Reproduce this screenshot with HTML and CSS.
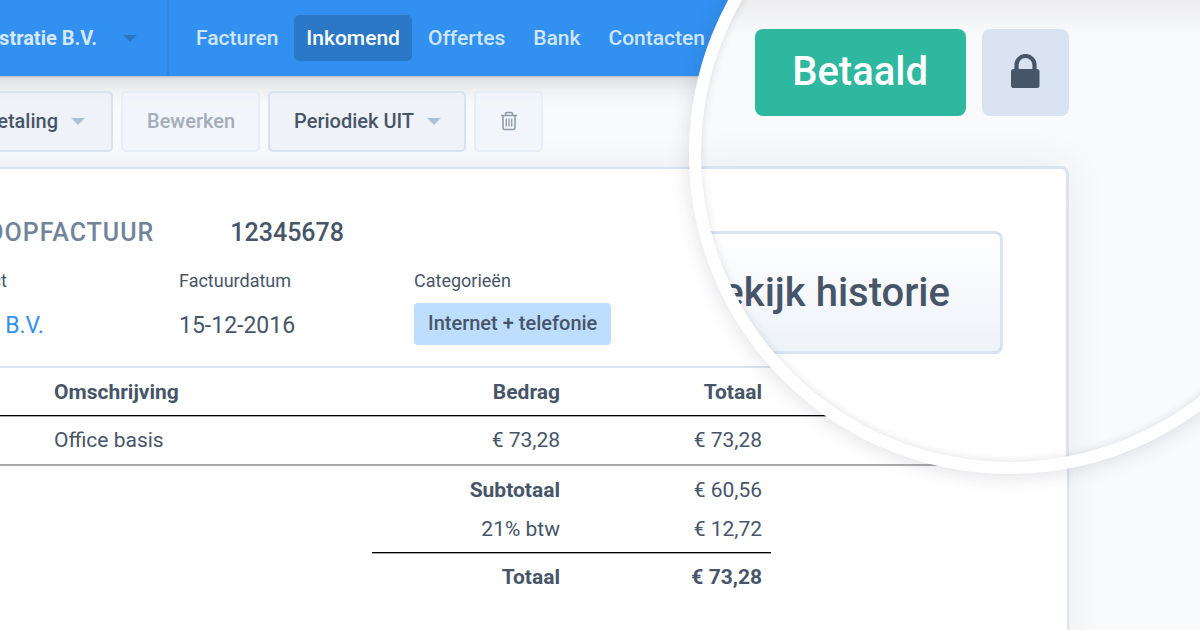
FILE: index.html
```html
<!doctype html>
<html lang="nl">

<head>
    <title>Inkoopfactuur 12345678</title>
    <meta charset="utf-8">
    <link rel="stylesheet" href="styles.css">
</head>

<body>
    <div class="app">
        <header class="topbar">
            <button class="administration" type="button">Demo Administratie B.V. <span class="caret"></span></button>
            <nav class="menu">
                <a href="#">Facturen</a>
                <a href="#" class="active">Inkomend</a>
                <a href="#">Offertes</a>
                <a href="#">Bank</a>
                <a href="#">Contacten</a>
            </nav>
        </header>
        <main>
            <div class="toolbar">
                <button class="btn btn-payment" type="button">Koppel aan betaling <span class="caret"></span></button>
                <button class="btn" type="button" disabled>Bewerken</button>
                <button class="btn" type="button">Periodiek UIT <span class="caret"></span></button>
                <button class="btn" type="button" aria-label="Verwijderen" disabled>
                    <svg width="18" height="20" viewBox="0 0 18 20" fill="none" stroke="#8d99a8" stroke-width="1.5">
                        <path d="M1 4.5h16M5.5 4V2.8Q5.5 1.5 6.8 1.5h4.4Q12.5 1.5 12.5 2.8V4M3 4.5V17Q3 18.5 4.5 18.5h9Q15 18.5 15 17V4.5"/>
                        <path d="M6.3 7.5v8M9 7.5v8M11.7 7.5v8" stroke-width="1.3"/>
                    </svg>
                </button>
            </div>
            <section class="invoice">
                <h1><span class="kind">INKOOPFACTUUR</span> <span>12345678</span></h1>
                <dl class="meta">
                    <div>
                        <dt>Contact</dt>
                        <dd><a href="#">Tele2 B.V.</a></dd>
                    </div>
                    <div>
                        <dt>Factuurdatum</dt>
                        <dd>15-12-2016</dd>
                    </div>
                    <div>
                        <dt>Categorieën</dt>
                        <dd><span class="tag">Internet + telefonie</span></dd>
                    </div>
                </dl>
                <table>
                    <thead>
                        <tr>
                            <th class="col-count"></th>
                            <th class="col-text">Omschrijving</th>
                            <th class="col-amount num">Bedrag</th>
                            <th class="col-total num">Totaal</th>
                            <th></th>
                        </tr>
                    </thead>
                    <tbody>
                        <tr>
                            <td></td>
                            <td>Office basis</td>
                            <td class="num">€ 73,28</td>
                            <td class="num">€ 73,28</td>
                            <td></td>
                        </tr>
                    </tbody>
                    <tfoot>
                        <tr class="subtotal">
                            <td colspan="2"></td>
                            <th class="num">Subtotaal</th>
                            <td class="num">€ 60,56</td>
                            <td></td>
                        </tr>
                        <tr class="vat">
                            <td colspan="2"></td>
                            <td class="num">21% btw</td>
                            <td class="num">€ 12,72</td>
                            <td></td>
                        </tr>
                        <tr class="total">
                            <td colspan="2"></td>
                            <th class="num">Totaal</th>
                            <th class="num">€ 73,28</th>
                            <td></td>
                        </tr>
                    </tfoot>
                </table>
            </section>
        </main>
    </div>

    <!-- magnifier over the top right corner -->
    <aside class="lens">
        <div class="lens-bar">
            <span class="status">Betaald</span>
            <button class="lock" type="button" aria-label="Vergrendeld">
                <svg width="29" height="38" viewBox="0 0 29 38">
                    <path d="M5.5 17V11a9 9 0 0 1 18 0V17" fill="none" stroke="#475569" stroke-width="4.2"/>
                    <rect x="0" y="15" width="28.5" height="19" rx="2.5" fill="#475569"/>
                </svg>
            </button>
        </div>
        <div class="lens-card">
            <button class="history" type="button">Bekijk historie</button>
        </div>
    </aside>
</body>

</html>
```
FILE: styles.css
```css
* {
    box-sizing: border-box;
}

body {
    margin: 0;
    position: relative;
    height: 100vh;
    overflow: hidden;
    background: #f9fafc;
    color: #475569;
    font-family: Roboto, Arial, sans-serif;
    font-size: 21px;
    line-height: 27px;
}

button {
    font: inherit;
    color: inherit;
    white-space: nowrap;
}

a {
    color: #3190f0;
    text-decoration: none;
}

/* the left side of the app runs out of the window */
.app {
    margin-left: -120px;
}

.topbar {
    display: flex;
    height: 76px;
    background: #3190f0;
    box-shadow: 0 1px 2px rgba(40, 50, 70, 0.2), 0 4px 28px rgba(40, 40, 50, 0.22);
}

.administration {
    display: flex;
    align-items: center;
    justify-content: flex-end;
    gap: 26px;
    width: 289px;
    padding: 0 30px 0 0;
    border: 0;
    border-right: 2px solid #2e86e0;
    background: none;
    color: #d6e9fc;
    font-size: 20px;
    font-weight: 700;
}

.caret {
    border: 7px solid transparent;
    border-top-color: #afc1d8;
    border-bottom: 0;
}

.administration .caret {
    border-top-color: #2b76c2;
}

.menu {
    display: flex;
    align-items: center;
    gap: 4px;
    padding-left: 15px;
}

.menu a {
    padding: 10px 12px 9px;
    border-radius: 5px;
    color: #d0e6fc;
    font-weight: 500;
}

.menu .active {
    background: #2b79c6;
    color: #fff;
}

main {
    margin-right: 131px;
}

.toolbar {
    display: flex;
    gap: 8px;
    padding: 15px 0;
}

.btn {
    display: flex;
    align-items: center;
    justify-content: center;
    gap: 13px;
    height: 61px;
    padding: 0 23px 1px 24px;
    border: 2px solid #d8e2f0;
    border-radius: 5px;
    background: rgba(236, 240, 248, 0.8);
    font-size: 20px;
    font-weight: 500;
}

.btn:disabled {
    border-color: #e6edf5;
    background: rgba(240, 244, 250, 0.8);
    color: #a3acb8;
}

.btn-payment {
    width: 233px;
    padding-right: 26px;
    justify-content: flex-end;
}

.invoice {
    min-height: 100vh;
    padding: 47px 61px;
    border: 2px solid #dae3f1;
    border-radius: 6px;
    background: #fff;
    box-shadow: 0 0 32px rgba(40, 50, 70, 0.08);
}

h1 {
    display: flex;
    gap: 76px;
    margin: 0;
    font-size: 25px;
    font-weight: 500;
    line-height: 34px;
}

.kind {
    color: #718399;
    letter-spacing: 1px;
}

.meta {
    display: grid;
    grid-template-columns: repeat(3, 235px);
    margin: 17px 0;
    padding-left: 1px;
}

.meta dt {
    font-size: 18px;
    line-height: 28px;
}

.meta dd {
    margin: 8px 0 0;
    font-size: 23px;
    line-height: 46px;
}

.tag {
    display: block;
    width: max-content;
    padding: 6px 14px 8px;
    border-radius: 4px;
    background: #bedeff;
    font-size: 20px;
    font-weight: 500;
    line-height: 28px;
}

table {
    width: 100%;
    table-layout: fixed;
    border-spacing: 0;
    border-top: 2px solid #dae3f1;
}

th, td {
    padding: 11px 9px 9px;
    text-align: left;
}

.num {
    text-align: right;
}

.col-count {
    width: 102px;
}

.col-text {
    width: 327px;
}

.col-amount {
    width: 197px;
}

.col-total {
    width: 202px;
}

thead th {
    border-bottom: 1px solid #000;
    box-shadow: 0 1px #aaa;
}

tbody td {
    padding-bottom: 10px;
    border-bottom: 2px solid #aaa;
}

.subtotal > * {
    padding: 11px 9px 6px;
}

.vat > * {
    padding: 6px 9px 9px;
}

.total .num {
    border-top: 1px solid #000;
    box-shadow: inset 0 1px #aaa;
}

.lens {
    position: absolute;
    top: -167px;
    right: -130px;
    width: 641px;
    height: 641px;
    overflow: hidden;
    border: 12px solid #fff;
    border-radius: 50%;
    background: #f9fafc;
    box-shadow: 0 2px 20px rgba(40, 50, 70, 0.15);
    font-size: 40px;
    font-weight: 500;
}

.lens::after {
    content: "";
    position: absolute;
    inset: 0;
    border-radius: 50%;
    box-shadow: inset 0 0 8px rgba(40, 50, 70, 0.15);
    pointer-events: none;
}

.lens-bar {
    display: flex;
    justify-content: flex-end;
    gap: 16px;
    padding: 184px 249px 50px 0;
    background: linear-gradient(#ededf0 155px, #f9fafc 190px);
}

.status {
    padding: 0 38px 2px 37px;
    border-radius: 8px;
    background: #2eb8a0;
    color: #fff;
    line-height: 85px;
}

.lock {
    display: flex;
    align-items: center;
    justify-content: center;
    width: 87px;
    padding: 0;
    border: 0;
    border-radius: 8px;
    background: #d9e2f1;
}

.lens-card {
    display: flex;
    justify-content: flex-end;
    align-items: flex-start;
    height: 100%;
    margin: 0 249px 0 -12px;
    padding: 62px 63px 0 0;
    border: 3px solid #dae3f2;
    border-radius: 8px;
    background: #fff;
    box-shadow: 0 0 40px rgba(40, 50, 70, 0.08);
}

.history {
    height: 123px;
    padding: 0 50px;
    border: 3px solid #dae3f2;
    border-radius: 8px;
    background: linear-gradient(#fff, #eef2f9);
}
```
